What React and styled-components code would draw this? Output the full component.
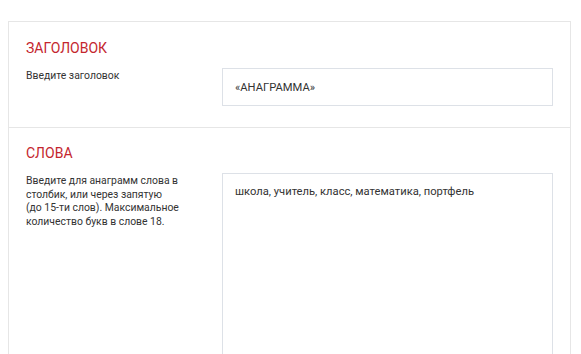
import styled, { createGlobalStyle } from 'styled-components';

const GlobalStyle = createGlobalStyle`
	body {
		margin: 0;
		background: #ffffff;
		font-family: Roboto, 'Liberation Sans', sans-serif;
		overflow: hidden;
	}
`;

const Page = styled.div`
	padding: 21px 10px 0 8px;
`;

const Card = styled.div`
	border: 1px solid #e6e6e6;
	border-bottom: none;
	background: #ffffff;
`;

const Section = styled.section`
	padding: ${({ $first }) => ($first ? '18px' : '17px')} 17px 21px 17px;
	border-top: ${({ $first }) => ($first ? 'none' : '1px solid #e6e6e6')};
`;

const Heading = styled.h2`
	margin: 0 0 11px;
	font-size: 14px;
	line-height: 17px;
	font-weight: 400;
	color: #c4262e;
	text-transform: uppercase;
`;

const Row = styled.div`
	display: flex;
	align-items: flex-start;
`;

const Label = styled.p`
	margin: 1px 0 0;
	width: 196px;
	flex-shrink: 0;
	padding-right: 20px;
	box-sizing: border-box;
	font-size: 10.4px;
	line-height: 13.7px;
	color: #333333;
	white-space: nowrap;
`;

const Field = styled.div`
	flex: 1;
	border: 1px solid #dde1e7;
	box-sizing: border-box;
	background: #ffffff;
	font-size: 11.2px;
	color: #333333;
	padding: ${({ $area }) => ($area ? '11px 12px' : '0 12px')};
	height: ${({ $area }) => ($area ? '220px' : '38px')};
	display: flex;
	align-items: ${({ $area }) => ($area ? 'flex-start' : 'center')};
`;

export default function App() {
	return (
		<>
			<GlobalStyle />
			<Page>
				<Card>
					<Section $first>
						<Heading>Заголовок</Heading>
						<Row>
							<Label>Введите заголовок</Label>
							<Field>«АНАГРАММА»</Field>
						</Row>
					</Section>
					<Section>
						<Heading>Слова</Heading>
						<Row>
							<Label>
								Введите для анаграмм слова в
								<br />
								столбик, или через запятую
								<br />
								(до 15-ти слов). Максимальное
								<br />
								количество букв в слове 18.
							</Label>
							<Field $area>школа, учитель, класс, математика, портфель</Field>
						</Row>
					</Section>
				</Card>
			</Page>
		</>
	);
}
